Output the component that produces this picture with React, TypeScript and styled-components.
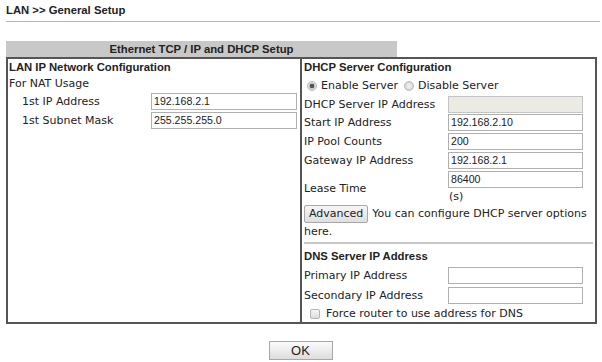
import React from "react"
import styled, { createGlobalStyle } from "styled-components"

const GlobalStyle = createGlobalStyle`
  body {
    margin: 0;
    background: #fff;
    font-family: "DejaVu Sans", Verdana, sans-serif;
    font-size: 11px;
    color: #222;
  }
`

const Page = styled.div`
  width: 602px;
  height: 362px;
  padding: 3px 5px 0 6px;
  box-sizing: border-box;
`

const Title = styled.div`
  font-family: "Liberation Sans", Arial, sans-serif;
  font-weight: bold;
  font-size: 11.3px;
  line-height: 14px;
  height: 14px;
  padding-bottom: 4px;
  border-bottom: 1px solid #b4b4b4;
  margin-right: -3px;
`

const TabBar = styled.div`
  margin-top: 19px;
  width: 391px;
  height: 16px;
  background: #c8c8c8;
  font-family: "Liberation Sans", Arial, sans-serif;
  font-weight: bold;
  font-size: 11.3px;
  line-height: 17px;
  text-align: center;
  color: #222;
`

const Frame = styled.div`
  display: grid;
  grid-template-columns: 292px 1fr;
  width: 591px;
  height: 267px;
  box-sizing: border-box;
  border: 2px solid #555;
  overflow: hidden;
`

const Panel = styled.div<{ $divider?: boolean }>`
  display: flex;
  flex-direction: column;
  padding: 0 0 0 ${(p) => (p.$divider ? "2px" : "1px")};
  border-left: ${(p) => (p.$divider ? "2px solid #555" : "none")};
`

const Heading = styled.div<{ $h?: number; $top?: number }>`
  font-family: "Liberation Sans", Arial, sans-serif;
  font-weight: bold;
  font-size: 11.3px;
  height: ${(p) => p.$h ?? 17}px;
  line-height: ${(p) => p.$h ?? 17}px;
  padding-top: ${(p) => p.$top ?? 0}px;
`

const Line = styled.div<{ $h: number; $indent?: number }>`
  height: ${(p) => p.$h}px;
  line-height: ${(p) => p.$h}px;
  padding-left: ${(p) => p.$indent ?? 0}px;
  white-space: nowrap;
`

const Row = styled.div<{ $cols: string; $h: number; $indent?: number }>`
  display: grid;
  grid-template-columns: ${(p) => p.$cols};
  align-items: center;
  height: ${(p) => p.$h}px;
  padding-left: ${(p) => p.$indent ?? 0}px;
`

const Label = styled.span`
  white-space: nowrap;
`

const Field = styled.div<{ $disabled?: boolean; $w: number }>`
  width: ${(p) => p.$w}px;
  height: 17px;
  box-sizing: border-box;
  border: 1px solid ${(p) => (p.$disabled ? "#c4c4c4" : "#b0b0b0")};
  background: ${(p) => (p.$disabled ? "#ebebe4" : "#fff")};
  font-family: "Liberation Sans", Arial, sans-serif;
  font-size: 10.6px;
  line-height: 15px;
  padding-left: 2px;
  color: #222;
`

const RadioRow = styled.div`
  display: flex;
  align-items: center;
  height: 19px;
  padding-left: 3px;
  gap: 3px;
`

const Radio = styled.span<{ $on?: boolean }>`
  display: inline-block;
  width: 10px;
  height: 10px;
  border-radius: 50%;
  box-sizing: border-box;
  border: 1px solid #b8b8b8;
  background: ${(p) =>
    p.$on
      ? "radial-gradient(circle, #555 0 2px, #bbb 2.5px, #eee 4px)"
      : "radial-gradient(circle, #f4f4f4 0, #d0d0d0 5px)"};
  margin-right: 1px;
`

const RadioText = styled.span`
  margin-right: 3px;
`

const LeaseBlock = styled.div`
  display: grid;
  grid-template-columns: 144px 1fr;
  height: 34px;
  padding-top: 1px;
`

const LeaseLabel = styled.span`
  align-self: center;
  padding-top: 1px;
`

const Unit = styled.div`
  height: 17px;
  line-height: 17px;
  padding-left: 1px;
`

const Advanced = styled.div`
  display: flex;
  flex-direction: column;
  height: 36px;
  line-height: 18px;
`

const AdvancedLine = styled.div`
  display: flex;
  align-items: center;
  gap: 4px;
  height: 18px;
  white-space: nowrap;
`

const Button = styled.button`
  height: 18px;
  padding: 0 4px;
  margin: 0;
  border: 1px solid #a8a8a8;
  border-radius: 2px;
  background: linear-gradient(#f6f6f6, #dedede);
  font-family: "DejaVu Sans", Verdana, sans-serif;
  font-size: 11px;
  color: #222;
  line-height: 16px;
`

const Separator = styled.div`
  margin: 1px 2px 0 0;
  border-top: 2px solid #c8c8c8;
  height: 0;
`

const CheckRow = styled.div`
  display: flex;
  align-items: center;
  height: 17px;
  padding-left: 6px;
  gap: 6px;
`

const Check = styled.span`
  width: 10px;
  height: 10px;
  box-sizing: border-box;
  border: 1px solid #b4b4b4;
  border-radius: 2px;
  background: linear-gradient(#f6f6f6, #dcdcdc);
`

const Footer = styled.div`
  display: flex;
  justify-content: center;
  padding-top: 17px;
  padding-right: 2px;
`

const OkButton = styled.button`
  width: 64px;
  height: 19px;
  border: 1px solid #a8a8a8;
  background: linear-gradient(#fbfbfb, #dddddd);
  font-family: "Liberation Sans", Arial, sans-serif;
  font-size: 13px;
  color: #222;
  padding: 0;
`

const DHCP_COLS = "144px 1fr"
const LAN_COLS = "129px 1fr"

export default function App() {
  return (
    <>
      <GlobalStyle />
      <Page>
        <Title>LAN &gt;&gt; General Setup</Title>
        <TabBar>Ethernet TCP / IP and DHCP Setup</TabBar>
        <Frame>
          <Panel>
            <Heading $h={16}>LAN IP Network Configuration</Heading>
            <Line $h={17}>For NAT Usage</Line>
            <Row $cols={LAN_COLS} $h={18} $indent={13}>
              <Label>1st IP Address</Label>
              <Field $w={146}>192.168.2.1</Field>
            </Row>
            <Row $cols={LAN_COLS} $h={20} $indent={13}>
              <Label>1st Subnet Mask</Label>
              <Field $w={146}>255.255.255.0</Field>
            </Row>
          </Panel>
          <Panel $divider>
            <Heading $h={17}>DHCP Server Configuration</Heading>
            <RadioRow>
              <Radio $on />
              <RadioText>Enable Server</RadioText>
              <Radio />
              <RadioText>Disable Server</RadioText>
            </RadioRow>
            <Row $cols={DHCP_COLS} $h={18}>
              <Label>DHCP Server IP Address</Label>
              <Field $w={135} $disabled />
            </Row>
            <Row $cols={DHCP_COLS} $h={19}>
              <Label>Start IP Address</Label>
              <Field $w={135}>192.168.2.10</Field>
            </Row>
            <Row $cols={DHCP_COLS} $h={19}>
              <Label>IP Pool Counts</Label>
              <Field $w={135}>200</Field>
            </Row>
            <Row $cols={DHCP_COLS} $h={19}>
              <Label>Gateway IP Address</Label>
              <Field $w={135}>192.168.2.1</Field>
            </Row>
            <LeaseBlock>
              <LeaseLabel>Lease Time</LeaseLabel>
              <div>
                <Field $w={135}>86400</Field>
                <Unit>(s)</Unit>
              </div>
            </LeaseBlock>
            <Advanced>
              <AdvancedLine>
                <Button>Advanced</Button>
                <span>You can configure DHCP server options</span>
              </AdvancedLine>
              <Line $h={18}>here.</Line>
            </Advanced>
            <Separator />
            <Heading $h={17} $top={4}>
              DNS Server IP Address
            </Heading>
            <Row $cols={DHCP_COLS} $h={20}>
              <Label>Primary IP Address</Label>
              <Field $w={135} />
            </Row>
            <Row $cols={DHCP_COLS} $h={20}>
              <Label>Secondary IP Address</Label>
              <Field $w={135} />
            </Row>
            <CheckRow>
              <Check />
              <span>Force router to use address for DNS</span>
            </CheckRow>
          </Panel>
        </Frame>
        <Footer>
          <OkButton>OK</OkButton>
        </Footer>
      </Page>
    </>
  )
}
